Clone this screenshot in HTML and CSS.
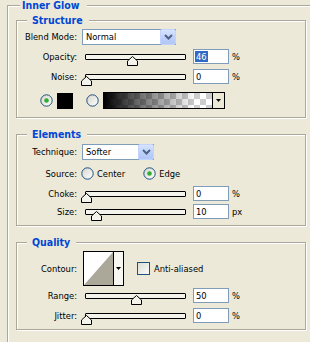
FILE: index.html
```html
<!DOCTYPE html>
<html>
<head>
<meta charset="utf-8">
<title>Inner Glow</title>
<link rel="stylesheet" href="styles.css">
</head>
<body>
<fieldset class="group outer">
  <legend class="title title-outer">Inner Glow</legend>

  <fieldset class="group panel panel-structure">
    <legend class="title title-panel">Structure</legend>
    <div class="row row-blend">
      <span class="label">Blend Mode:</span>
      <div class="combo combo-blend">
        <span class="combo-value">Normal</span>
        <span class="combo-btn"><svg width="9" height="6" viewBox="0 0 9 6"><path d="M1 1 L4.5 4.5 L8 1" fill="none" stroke="#4d6185" stroke-width="2"/></svg></span>
      </div>
    </div>
    <div class="row row-slider row-opacity">
      <span class="label">Opacity:</span>
      <div class="slider"><svg class="thumb" style="left:46%" width="11" height="10" viewBox="0 0 11 10"><polygon points="5.5,0.5 10.5,5 10.5,9.5 0.5,9.5 0.5,5" fill="#f4f3ec" stroke="#000"/></svg></div>
      <span class="field"><span class="sel">46</span></span>
      <span class="unit">%</span>
    </div>
    <div class="row row-slider row-noise">
      <span class="label">Noise:</span>
      <div class="slider"><svg class="thumb" style="left:0%" width="11" height="10" viewBox="0 0 11 10"><polygon points="5.5,0.5 10.5,5 10.5,9.5 0.5,9.5 0.5,5" fill="#f4f3ec" stroke="#000"/></svg></div>
      <span class="field">0</span>
      <span class="unit">%</span>
    </div>
    <div class="row row-color">
      <svg class="radio" width="13" height="13" viewBox="0 0 13 13">
        <defs>
          <linearGradient id="rfill" x1="0" y1="0" x2="1" y2="1"><stop offset="0" stop-color="#d6d5cc"/><stop offset="1" stop-color="#ffffff"/></linearGradient>
          <linearGradient id="cfill" x1="0" y1="0" x2="1" y2="1"><stop offset="0" stop-color="#dcdcd4"/><stop offset="1" stop-color="#fbfbf9"/></linearGradient>
        </defs>
        <circle cx="6.5" cy="6.5" r="5.7" fill="url(#rfill)" stroke="#1c5180"/>
        <circle cx="6.5" cy="6.5" r="2.3" fill="#2fae2f"/>
      </svg>
      <span class="swatch"></span>
      <svg class="radio radio-gap" width="13" height="13" viewBox="0 0 13 13"><circle cx="6.5" cy="6.5" r="5.7" fill="url(#rfill)" stroke="#1c5180"/></svg>
      <div class="picker">
        <span class="picker-bar"></span>
        <span class="picker-btn"><svg width="5" height="3" viewBox="0 0 5 3"><polygon points="0,0 5,0 2.5,3" fill="#000"/></svg></span>
      </div>
    </div>
  </fieldset>

  <fieldset class="group panel panel-elements">
    <legend class="title title-panel">Elements</legend>
    <div class="row row-technique">
      <span class="label">Technique:</span>
      <div class="combo combo-technique">
        <span class="combo-value">Softer</span>
        <span class="combo-btn"><svg width="9" height="6" viewBox="0 0 9 6"><path d="M1 1 L4.5 4.5 L8 1" fill="none" stroke="#4d6185" stroke-width="2"/></svg></span>
      </div>
    </div>
    <div class="row row-source">
      <span class="label">Source:</span>
      <svg class="radio radio-source" width="13" height="13" viewBox="0 0 13 13"><circle cx="6.5" cy="6.5" r="5.7" fill="url(#rfill)" stroke="#1c5180"/></svg>
      <span class="opt opt-center">Center</span>
      <svg class="radio" width="13" height="13" viewBox="0 0 13 13"><circle cx="6.5" cy="6.5" r="5.7" fill="url(#rfill)" stroke="#1c5180"/><circle cx="6.5" cy="6.5" r="2.3" fill="#2fae2f"/></svg>
      <span class="opt">Edge</span>
    </div>
    <div class="row row-slider row-choke">
      <span class="label">Choke:</span>
      <div class="slider"><svg class="thumb" style="left:0%" width="11" height="10" viewBox="0 0 11 10"><polygon points="5.5,0.5 10.5,5 10.5,9.5 0.5,9.5 0.5,5" fill="#f4f3ec" stroke="#000"/></svg></div>
      <span class="field">0</span>
      <span class="unit">%</span>
    </div>
    <div class="row row-slider row-size">
      <span class="label">Size:</span>
      <div class="slider"><svg class="thumb" style="left:10%" width="11" height="10" viewBox="0 0 11 10"><polygon points="5.5,0.5 10.5,5 10.5,9.5 0.5,9.5 0.5,5" fill="#f4f3ec" stroke="#000"/></svg></div>
      <span class="field">10</span>
      <span class="unit">px</span>
    </div>
  </fieldset>

  <fieldset class="group panel panel-quality">
    <legend class="title title-panel">Quality</legend>
    <div class="row row-contour">
      <span class="label">Contour:</span>
      <div class="contour">
        <span class="contour-preview"><svg width="29" height="33" viewBox="0 0 29 33"><polygon points="0,33 29,0 29,33" fill="#aca899"/></svg></span>
        <span class="contour-btn"><svg width="5" height="3" viewBox="0 0 5 3"><polygon points="0,0 5,0 2.5,3" fill="#000"/></svg></span>
      </div>
      <svg class="check" width="13" height="13" viewBox="0 0 13 13"><rect x="0.5" y="0.5" width="12" height="12" fill="url(#cfill)" stroke="#1c5180"/></svg>
      <span class="opt">Anti-aliased</span>
    </div>
    <div class="row row-slider row-range">
      <span class="label">Range:</span>
      <div class="slider"><svg class="thumb" style="left:50%" width="11" height="10" viewBox="0 0 11 10"><polygon points="5.5,0.5 10.5,5 10.5,9.5 0.5,9.5 0.5,5" fill="#f4f3ec" stroke="#000"/></svg></div>
      <span class="field">50</span>
      <span class="unit">%</span>
    </div>
    <div class="row row-slider row-jitter">
      <span class="label">Jitter:</span>
      <div class="slider"><svg class="thumb" style="left:0%" width="11" height="10" viewBox="0 0 11 10"><polygon points="5.5,0.5 10.5,5 10.5,9.5 0.5,9.5 0.5,5" fill="#f4f3ec" stroke="#000"/></svg></div>
      <span class="field">0</span>
      <span class="unit">%</span>
    </div>
  </fieldset>
</fieldset>
</body>
</html>
```
FILE: styles.css
```css
html, body {
  margin: 0;
  padding: 0;
}
body {
  width: 310px;
  height: 342px;
  overflow: hidden;
  background: #ece9d8;
  font-family: "DejaVu Sans Condensed", "DejaVu Sans", sans-serif;
  font-size: 9.3px;
  line-height: 12px;
  color: #000;
}

.group {
  margin: 0;
  padding: 0;
  min-width: 0;
  border: 1px solid #aca899;
  box-shadow: inset 1px 1px 0 #fff, 1px 1px 0 #fff;
}

.title {
  font-weight: bold;
  font-size: 10.5px;
  line-height: 12px;
  color: #0046d5;
  background: #ece9d8;
}
.title-outer {
  margin-left: 12px;
  padding: 0 7px 0 2px;
}
.title-panel {
  margin-left: 10px;
  padding: 0 6px 0 5px;
}

/* the outer group continues past the right and bottom edges of the panel */
.outer {
  margin: -1px 0 0 7px;
  width: 303px;
  height: 343px;
  box-sizing: border-box;
  border-right: none;
  border-bottom: none;
  box-shadow: inset 1px 1px 0 #fff;
}

.panel {
  margin-left: 8px;
  width: 290px;
  box-sizing: border-box;
}
.panel-structure {
  margin-top: 3px;
  padding: 3px 0 8px;
}
.panel-elements {
  margin-top: 10px;
  padding: 4px 0 6px;
}
.panel-quality {
  margin-top: 10px;
  padding: 3px 0 6px;
}

.row {
  display: flex;
  align-items: center;
}
.label {
  flex: none;
  width: 60px;
  text-align: right;
}

/* combo boxes */
.combo {
  flex: none;
  display: flex;
  align-items: center;
  box-sizing: border-box;
  height: 16px;
  margin-left: 5px;
  border: 1px solid #7f9db9;
  background: #fff;
}
.combo-blend { width: 94px; }
.combo-technique { width: 72px; }
.combo-value {
  flex: 1;
  padding-left: 3px;
}
.combo-btn {
  flex: none;
  display: flex;
  align-items: center;
  justify-content: center;
  box-sizing: border-box;
  width: 16px;
  height: 16px;
  margin: -1px -1px -1px 0;
  border: 1px solid #c3d3fd;
  border-radius: 2px;
  background: linear-gradient(180deg, #d8e4fe 0%, #bccffa 60%, #b0c6f6 100%);
}

/* sliders */
.row-slider { height: 15px; }
.slider {
  position: relative;
  flex: none;
  box-sizing: border-box;
  width: 101px;
  height: 6px;
  margin-left: 8px;
  border: 1px solid #000;
  border-radius: 1px;
  background: #f4f3ec;
}
.thumb {
  position: absolute;
  top: 1px;
  margin-left: -5px;
}
.field {
  flex: none;
  box-sizing: border-box;
  width: 36px;
  height: 15px;
  margin-left: 7px;
  padding-left: 2px;
  border: 1px solid #7f9db9;
  background: #fff;
  line-height: 13px;
}
.sel {
  margin-left: -1px;
  padding: 0 1px;
  background: #316ac5;
  color: #fff;
}
.unit { margin-left: 3px; }

/* structure rows */
.row-blend { height: 16px; margin-bottom: 4px; }
.row-opacity { margin-bottom: 5px; }
.row-noise { margin-bottom: 8px; }
.row-color {
  height: 17px;
  padding-left: 23px;
}
.radio { flex: none; display: block; }
.swatch {
  flex: none;
  width: 16px;
  height: 16px;
  margin-left: 4px;
  background: #000;
}
.radio-gap { margin-left: 13px; }
.picker {
  flex: none;
  display: flex;
  box-sizing: border-box;
  width: 122px;
  height: 17px;
  margin-left: 4px;
  border: 1px solid #000;
}
.picker-bar {
  flex: 1;
  background:
    linear-gradient(90deg, #000 0%, rgba(0,0,0,0.55) 35%, rgba(0,0,0,0) 85%),
    conic-gradient(#cdcdcd 25%, #fff 0 50%, #cdcdcd 0 75%, #fff 0) 0 0 / 12px 12px;
}
.picker-btn {
  flex: none;
  display: flex;
  align-items: center;
  justify-content: center;
  width: 11px;
  border-left: 1px solid #000;
  background: #ece9d8;
}

/* elements rows */
.row-technique { height: 16px; margin-bottom: 7px; }
.row-source { height: 13px; margin-bottom: 6px; }
.radio-source { margin-left: 4px; }
.opt { margin-left: 3px; }
.opt-center { margin-right: 18px; }
.row-choke { margin-bottom: 3px; }

/* quality rows */
.row-contour { height: 35px; margin-bottom: 2px; }
.contour {
  flex: none;
  display: flex;
  box-sizing: border-box;
  width: 41px;
  height: 35px;
  margin-left: 6px;
  border: 1px solid #000;
}
.contour-preview {
  flex: none;
  display: flex;
  width: 29px;
  background: #fff;
  border-right: 1px solid #000;
}
.contour-btn {
  flex: 1;
  display: flex;
  align-items: center;
  justify-content: center;
  background: #f7f6f1;
}
.check { flex: none; display: block; margin-left: 13px; }
.check + .opt { margin-left: 4px; }
.row-range { margin-bottom: 5px; }
```
